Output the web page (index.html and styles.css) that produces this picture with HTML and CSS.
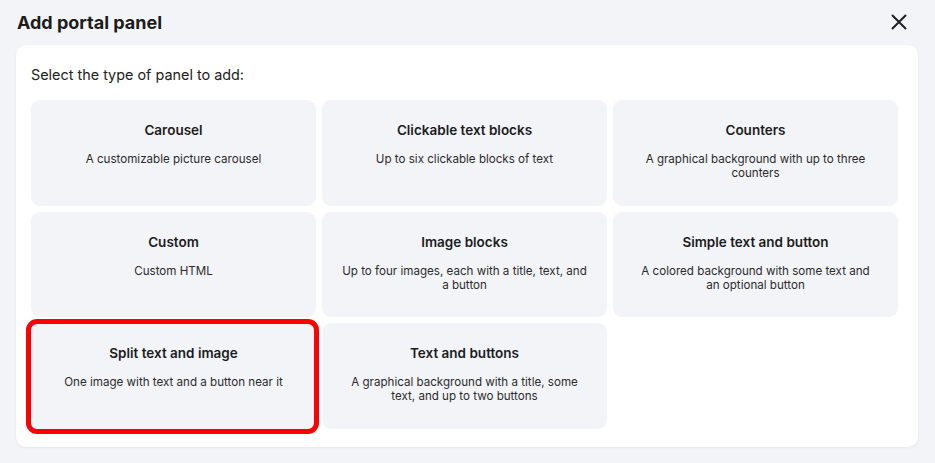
FILE: index.html
```html
<!DOCTYPE html>
<html>
<head>
<meta charset="utf-8">
<link rel="stylesheet" href="styles.css">
</head>
<body>
<div class="dialog">
  <header class="dialog-header">
    <h1 class="dialog-title">Add portal panel</h1>
    <button class="close-btn" aria-label="Close">
      <svg width="16" height="16" viewBox="0 0 16 16"><path d="M1.5 1.5L14.5 14.5M14.5 1.5L1.5 14.5" stroke="#1f1f1f" stroke-width="2" stroke-linecap="round"/></svg>
    </button>
  </header>
  <section class="panel">
    <p class="lead">Select the type of panel to add:</p>
    <div class="grid">
      <div class="card"><div class="card-title">Carousel</div><div class="card-desc">A customizable picture carousel</div></div>
      <div class="card"><div class="card-title">Clickable text blocks</div><div class="card-desc">Up to six clickable blocks of text</div></div>
      <div class="card"><div class="card-title">Counters</div><div class="card-desc">A graphical background with up to three counters</div></div>
      <div class="card"><div class="card-title">Custom</div><div class="card-desc">Custom HTML</div></div>
      <div class="card"><div class="card-title">Image blocks</div><div class="card-desc">Up to four images, each with a title, text, and a button</div></div>
      <div class="card"><div class="card-title">Simple text and button</div><div class="card-desc">A colored background with some text and an&nbsp;optional button</div></div>
      <div class="card selected"><div class="card-title">Split text and image</div><div class="card-desc">One image with text and a button near it</div></div>
      <div class="card"><div class="card-title">Text and buttons</div><div class="card-desc">A graphical background with a title, some text, and up to two buttons</div></div>
    </div>
  </section>
</div>
</body>
</html>
```
FILE: styles.css
```css
* { box-sizing: border-box; }
html, body { margin: 0; padding: 0; }
body {
  background: #f3f4f8;
  font-family: "Inter", "Noto Sans", sans-serif;
  color: #1c1c1c;
  width: 935px;
  height: 463px;
  overflow: hidden;
}
.dialog { padding: 8px 16px 0 16px; }
.dialog-header {
  display: flex;
  align-items: center;
  justify-content: space-between;
  height: 28px;
  padding-left: 1px;
}
.dialog-title {
  margin: 0;
  font-size: 18px;
  font-weight: 700;
  letter-spacing: 0;
}
.close-btn {
  border: 0;
  background: none;
  padding: 0;
  margin-right: 12px;
  width: 16px;
  height: 16px;
  display: flex;
}
.panel {
  margin-top: 9px;
  width: 902px;
  background: #fff;
  border-radius: 10px;
  box-shadow: 0 1px 3px rgba(0,0,0,0.06);
  padding: 21px 20px 18px 15px;
}
.lead {
  margin: 0 0 16px 0;
  font-size: 14.4px;
  line-height: 18px;
  color: #222;
}
.grid {
  display: grid;
  grid-template-columns: repeat(3, 285px);
  grid-auto-rows: 105.5px;
  gap: 6px;
}
.card {
  position: relative;
  background: #f3f4f8;
  border-radius: 9px;
  padding: 21px 16px 0 16px;
  text-align: center;
}
.card-title {
  font-size: 13.5px;
  font-weight: 600;
  line-height: 18px;
  color: #1c1c1c;
}
.card-desc {
  margin-top: 13px;
  font-size: 11.6px;
  line-height: 14px;
  color: #2b2b2b;
  padding: 0;
}
.card.selected::after {
  content: "";
  position: absolute;
  inset: -4px -3px -5px -5px;
  border: 5px solid #ff0000;
  border-radius: 11px;
}
```
